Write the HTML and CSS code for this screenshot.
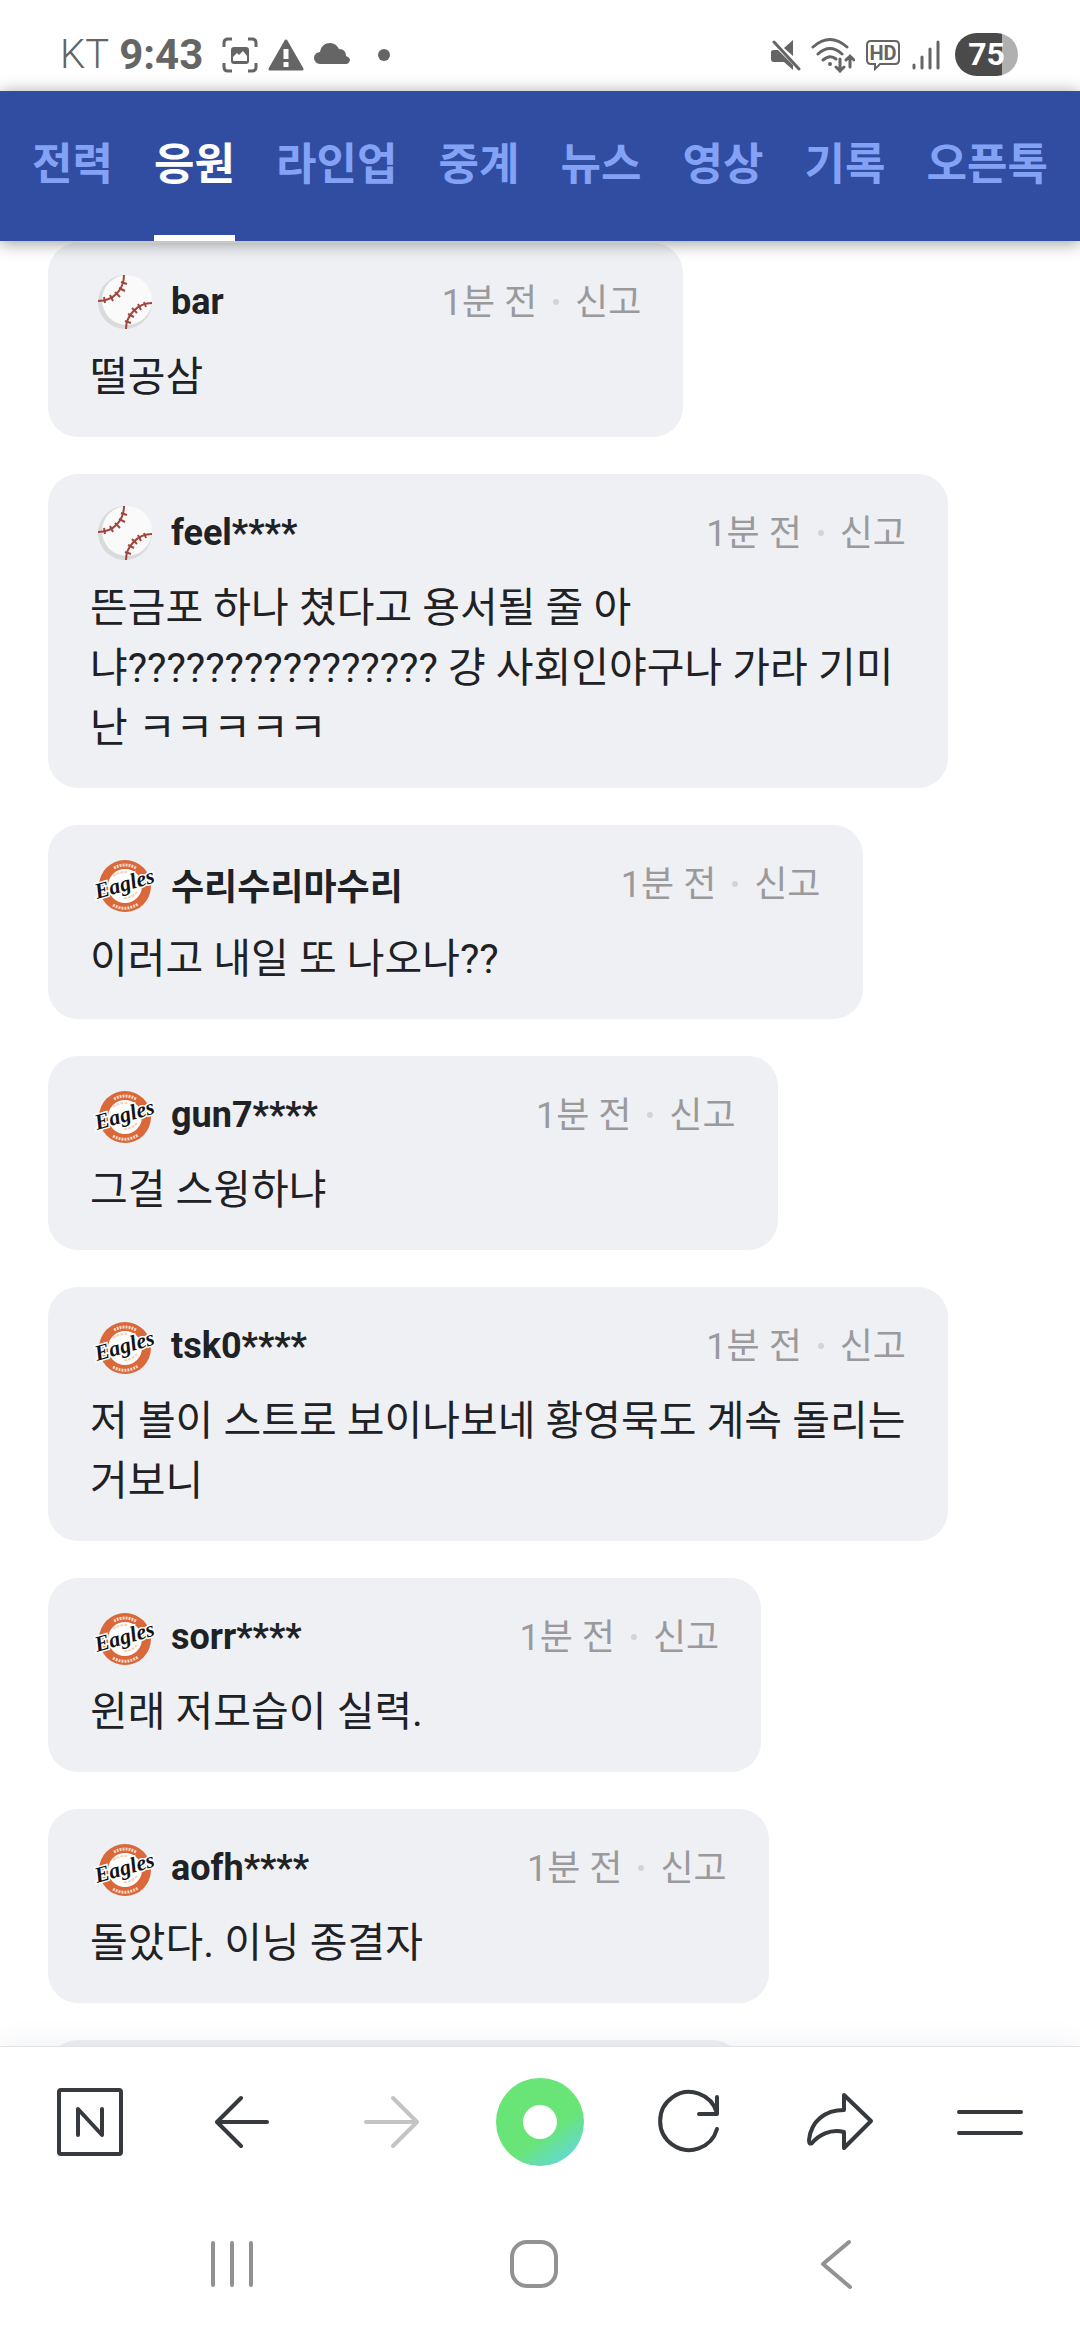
FILE: index.html
```
<!DOCTYPE html>
<html lang="ko">
<head>
  <meta charset="UTF-8" />
  <meta name="viewport" content="width=device-width, initial-scale=1.0"/>
  <title>응원</title>
  <link rel="stylesheet" href="styles.css">
</head>
<body>

  <!-- Shared avatars -->
  <svg class="sprite" aria-hidden="true">
    <symbol id="ball" viewBox="0 0 66 58">
      <circle cx="35" cy="29" r="27" fill="#d9dbdb"/>
      <circle cx="37" cy="27" r="25" fill="#fafafa"/>
      <g fill="none" stroke="#a0463c" stroke-width="2">
        <path d="M34 2C34 16 24 28 8 28"/>
        <path d="M62 30C48 30 36 42 36 56"/>
        <path d="M31 9l6 2M29 15l6 3M25 19l5 5M20 22l3 6M14 24l1 6M54 29l2 5M48 31l3 6M42 35l5 5M38 41l6 3M35 48l6 2"/>
      </g>
    </symbol>
    <symbol id="eagles" viewBox="0 0 66 58">
      <circle cx="35" cy="31" r="26" fill="#d9683a"/>
      <circle cx="35" cy="31" r="17" fill="#fff"/>
      <path d="M24 13q11-6 22 0M23 50q12 7 25-1" fill="none" stroke="#f8d9c8" stroke-width="3" stroke-dasharray="2 1"/>
      <path d="M23 21q8-5 15-4M34 43q8 0 13-6" fill="none" stroke="#f3d3bd" stroke-width="2" stroke-dasharray="3 1"/>
      <text class="logo-text" x="7" y="44" transform="rotate(-16 7 44)">Eagles</text>
    </symbol>
  </svg>

  <!-- Phone status -->
  <div class="status">
    <div class="status-left">
      <span class="carrier">KT</span>
      <span class="time">9:43</span>
      <svg width="36" height="36" viewBox="0 0 36 36">
        <path d="M2 10V6q0-4 4-4h4M26 2h4q4 0 4 4v4M34 26v4q0 4-4 4h-4M10 34H6q-4 0-4-4v-4" fill="none" stroke="#656565" stroke-width="3"/>
        <rect x="9" y="10" width="18" height="17" rx="3" fill="#656565"/>
        <path d="M11 20l4-4 2 2 4-4 4 5v5H11z" fill="#fff"/>
      </svg>
      <svg width="36" height="36" viewBox="0 0 36 36">
        <path d="M18 4L34 32H2z" fill="#656565" stroke="#656565" stroke-width="3" stroke-linejoin="round"/>
        <path d="M18 12v10M18 25v5" stroke="#fff" stroke-width="5"/>
      </svg>
      <svg width="36" height="36" viewBox="0 0 36 36">
        <path d="M6 27a6 6 0 0 1 0-12C7 9 11 6 16 6c4 0 7 2 9 6 5 0 7 3 7 7 3 1 4 3 4 4q-1 4-4 4z" fill="#656565"/>
      </svg>
      <span class="more-dot"></span>
    </div>
    <div class="status-right">
      <svg width="30" height="32" viewBox="0 0 30 32">
        <path d="M0 13q0-2 3-2h4L22 26v5l-9-8H3q-3 0-3-3zM13 9l9-8v16z" fill="#656565"/>
        <path d="M3 3l25 27" stroke="#656565" stroke-width="3" stroke-linecap="round"/>
      </svg>
      <svg width="44" height="36" viewBox="0 0 44 36">
        <g fill="none" stroke="#656565" stroke-width="3" stroke-linecap="round">
          <path d="M2 10q17-15 34 0M7 17q12-11 24 0M12 23q7-6 13-1"/>
          <path d="M29 22v12M25 30l4 4 4-4M39 30V19M35 23l4-4 4 4"/>
        </g>
        <circle cx="19" cy="27" r="2" fill="#656565"/>
      </svg>
      <svg width="36" height="32" viewBox="0 0 36 32">
        <path d="M6 2h24q4 0 4 4v15q0 4-4 4H15l-5 5v-5H6q-4 0-4-4V6q0-4 4-4z" fill="none" stroke="#656565" stroke-width="2"/>
        <text class="hd-text" x="18" y="21" text-anchor="middle">HD</text>
      </svg>
      <svg width="30" height="32" viewBox="0 0 30 32">
        <path d="M3 26v3M11 18v11M19 10v19M27 3v26" stroke="#656565" stroke-width="3" stroke-linecap="round"/>
      </svg>
      <span class="battery">75</span>
    </div>
  </div>

  <!-- Tabs -->
  <nav class="tabs">
    <a class="tab" href="#">전력</a>
    <a class="tab active" href="#">응원</a>
    <a class="tab" href="#">라인업</a>
    <a class="tab" href="#">중계</a>
    <a class="tab" href="#">뉴스</a>
    <a class="tab" href="#">영상</a>
    <a class="tab" href="#">기록</a>
    <a class="tab" href="#">오픈톡</a>
  </nav>

  <!-- Cheering comments -->
  <main class="chat">
    <article class="comment">
      <header>
        <svg class="avatar"><use href="#ball"/></svg>
        <strong class="name">bar</strong>
        <span class="ago">1분 전</span>
        <button class="report">신고</button>
      </header>
      <p>떨공삼</p>
    </article>

    <article class="comment">
      <header>
        <svg class="avatar"><use href="#ball"/></svg>
        <strong class="name">feel****</strong>
        <span class="ago">1분 전</span>
        <button class="report">신고</button>
      </header>
      <p>뜬금포 하나 쳤다고 용서될 줄 아냐???????????????? 걍 사회인야구나 가라 기미난 ㅋㅋㅋㅋㅋ</p>
    </article>

    <article class="comment">
      <header>
        <svg class="avatar"><use href="#eagles"/></svg>
        <strong class="name">수리수리마수리</strong>
        <span class="ago">1분 전</span>
        <button class="report">신고</button>
      </header>
      <p>이러고 내일 또 나오나??</p>
    </article>

    <article class="comment">
      <header>
        <svg class="avatar"><use href="#eagles"/></svg>
        <strong class="name">gun7****</strong>
        <span class="ago">1분 전</span>
        <button class="report">신고</button>
      </header>
      <p>그걸 스윙하냐</p>
    </article>

    <article class="comment">
      <header>
        <svg class="avatar"><use href="#eagles"/></svg>
        <strong class="name">tsk0****</strong>
        <span class="ago">1분 전</span>
        <button class="report">신고</button>
      </header>
      <p>저 볼이 스트로 보이나보네 황영묵도 계속 돌리는거보니</p>
    </article>

    <article class="comment">
      <header>
        <svg class="avatar"><use href="#eagles"/></svg>
        <strong class="name">sorr****</strong>
        <span class="ago">1분 전</span>
        <button class="report">신고</button>
      </header>
      <p>윈래 저모습이 실력.</p>
    </article>

    <article class="comment">
      <header>
        <svg class="avatar"><use href="#eagles"/></svg>
        <strong class="name">aofh****</strong>
        <span class="ago">1분 전</span>
        <button class="report">신고</button>
      </header>
      <p>돌았다. 이닝 종결자</p>
    </article>

    <article class="comment loading"></article>
  </main>

  <!-- Browser toolbar -->
  <footer class="toolbar">
    <button aria-label="홈">
      <svg viewBox="-48 -48 96 96"><rect x="-31" y="-32" width="62" height="64" rx="2"/><path d="M-12 13V-13L12 13V-13"/></svg>
    </button>
    <button aria-label="뒤로">
      <svg viewBox="-48 -48 96 96"><path d="M1-24L-23 0 1 24M-22 0H27"/></svg>
    </button>
    <button aria-label="앞으로" disabled>
      <svg viewBox="-48 -48 96 96"><path d="M3-24L27 0 3 24M26 0H-24"/></svg>
    </button>
    <button aria-label="그린닷"><span class="green-dot"></span></button>
    <button aria-label="새로고침">
      <svg viewBox="-48 -48 96 96"><path d="M27 7A29 29 0 1 1 27-9M27-25V-8H9"/></svg>
    </button>
    <button aria-label="공유">
      <svg viewBox="-48 -48 96 96"><path d="M4-27L31-1 4 26V10C-10 6-22 14-28 21Q-31 23-31 18C-29-1-15-12 4-12Z"/></svg>
    </button>
    <button aria-label="메뉴">
      <svg viewBox="-48 -48 96 96"><path d="M-31-10H31M-31 11H31"/></svg>
    </button>
  </footer>

  <!-- System keys -->
  <div class="keys">
    <button aria-label="최근 앱">
      <svg viewBox="-32 -32 64 64"><path d="M-19-21V21M0-21V21M19-21V21"/></svg>
    </button>
    <button aria-label="홈 화면">
      <svg viewBox="-32 -32 64 64"><rect x="-22" y="-22" width="44" height="44" rx="15"/></svg>
    </button>
    <button aria-label="이전">
      <svg viewBox="-32 -32 64 64"><path d="M13-22L-13 0 14 23"/></svg>
    </button>
  </div>

</body>
</html>
```
FILE: styles.css
```
:root {
  --primary: #314da2;
  --tab: #84a2f5;
  --bubble: #eff0f4;
  --text: #202124;
  --muted: #9a9a9c;
  --status: #656565;
  --icon: #36393d;
}

* {
  margin: 0;
  padding: 0;
  box-sizing: border-box;
  font-family: Roboto, 'Noto Sans CJK KR', sans-serif;
}

body {
  display: flex;
  flex-direction: column;
  height: 100vh;
  background: white;
  color: var(--text);
}

button {
  background: none;
  border: none;
}

.sprite {
  display: none;
}

.logo-text {
  font-family: 'Liberation Serif', serif;
  font-size: 22px;
  font-weight: bold;
  font-style: italic;
  fill: #111318;
  stroke: white;
  stroke-width: 3px;
  paint-order: stroke;
}

.status {
  flex: none;
  display: flex;
  justify-content: space-between;
  align-items: center;
  height: 91px;
  padding: 18px 62px 0 60px;
  color: var(--status);
}

.status-left, .status-right {
  display: flex;
  align-items: center;
  gap: 10px;
}

.carrier {
  font-size: 40px;
  font-weight: 300;
}

.time {
  font-size: 42px;
  font-weight: bold;
  margin-right: 9px;
}

.more-dot {
  width: 12px;
  height: 12px;
  margin-left: 18px;
  border-radius: 50%;
  background: var(--status);
}

.hd-text {
  font-size: 20px;
  font-weight: bold;
  fill: var(--status);
}

.battery {
  width: 63px;
  height: 43px;
  margin-left: 4px;
  border-radius: 22px;
  background: linear-gradient(to right, #4a4a4a 75%, #b0b0b0 75%);
  color: white;
  font-size: 32px;
  font-weight: bold;
  line-height: 43px;
  text-align: center;
}

.tabs {
  position: relative;
  z-index: 1;
  flex: none;
  display: flex;
  justify-content: space-between;
  height: 150px;
  padding: 0 32px;
  background: var(--primary);
  box-shadow: 0 2px 16px rgba(0,0,0,0.4);
}

.tab {
  border-bottom: 6px solid transparent;
  color: var(--tab);
  font-size: 44px;
  font-weight: bold;
  line-height: 148px;
  text-decoration: none;
}

.tab.active {
  color: white;
  border-color: white;
}

.chat {
  flex: 1;
  min-height: 0;
  display: flex;
  flex-direction: column;
  align-items: flex-start;
  gap: 37px;
  padding: 2px 48px 0;
  overflow: hidden;
}

.comment {
  flex: none;
  max-width: 900px;
  padding: 30px 42px;
  border-radius: 30px;
  background: var(--bubble);
}

.comment.loading {
  width: 694px;
  height: 194px;
}

.comment header {
  display: flex;
  align-items: center;
  height: 58px;
  margin-bottom: 16px;
}

.avatar {
  flex: none;
  width: 66px;
  height: 58px;
  margin-right: 15px;
}

.name {
  margin-right: auto;
  padding-right: 218px;
  font-size: 36px;
}

.ago, .report {
  padding-bottom: 6px;
  color: var(--muted);
  font-size: 36px;
  white-space: nowrap;
}

.ago::after {
  content: '';
  display: inline-block;
  width: 6px;
  height: 6px;
  margin: 0 16px;
  border-radius: 50%;
  background: #d3d4d7;
  vertical-align: 10px;
}

.comment p {
  font-size: 41px;
  line-height: 60px;
}

.toolbar {
  position: relative;
  flex: none;
  display: flex;
  align-items: center;
  height: 150px;
  padding: 0 15px;
  background: white;
  border-top: 1px solid #e2e3e5;
  box-shadow: 0 -4px 24px rgba(60,80,120,0.08);
}

.toolbar button {
  flex: 1;
  display: flex;
  justify-content: center;
}

.toolbar svg {
  width: 96px;
  height: 96px;
  fill: none;
  stroke: var(--icon);
  stroke-width: 4;
  stroke-linecap: round;
  stroke-linejoin: round;
}

.toolbar button:disabled svg {
  stroke: #c4c4c4;
}

.green-dot {
  width: 88px;
  height: 88px;
  border: 27px solid transparent;
  border-radius: 50%;
  background:
    linear-gradient(white, white) padding-box,
    linear-gradient(145deg, #68e576 60%, #62d6e8 95%) border-box;
}

.keys {
  position: relative;
  flex: none;
  display: flex;
  align-items: center;
  height: 144px;
  padding: 0 93px 8px 81px;
  background: white;
}

.keys button {
  flex: 1;
  display: flex;
  justify-content: center;
}

.keys svg {
  width: 64px;
  height: 64px;
  fill: none;
  stroke: #929292;
  stroke-width: 4;
  stroke-linecap: round;
  stroke-linejoin: round;
}
```
